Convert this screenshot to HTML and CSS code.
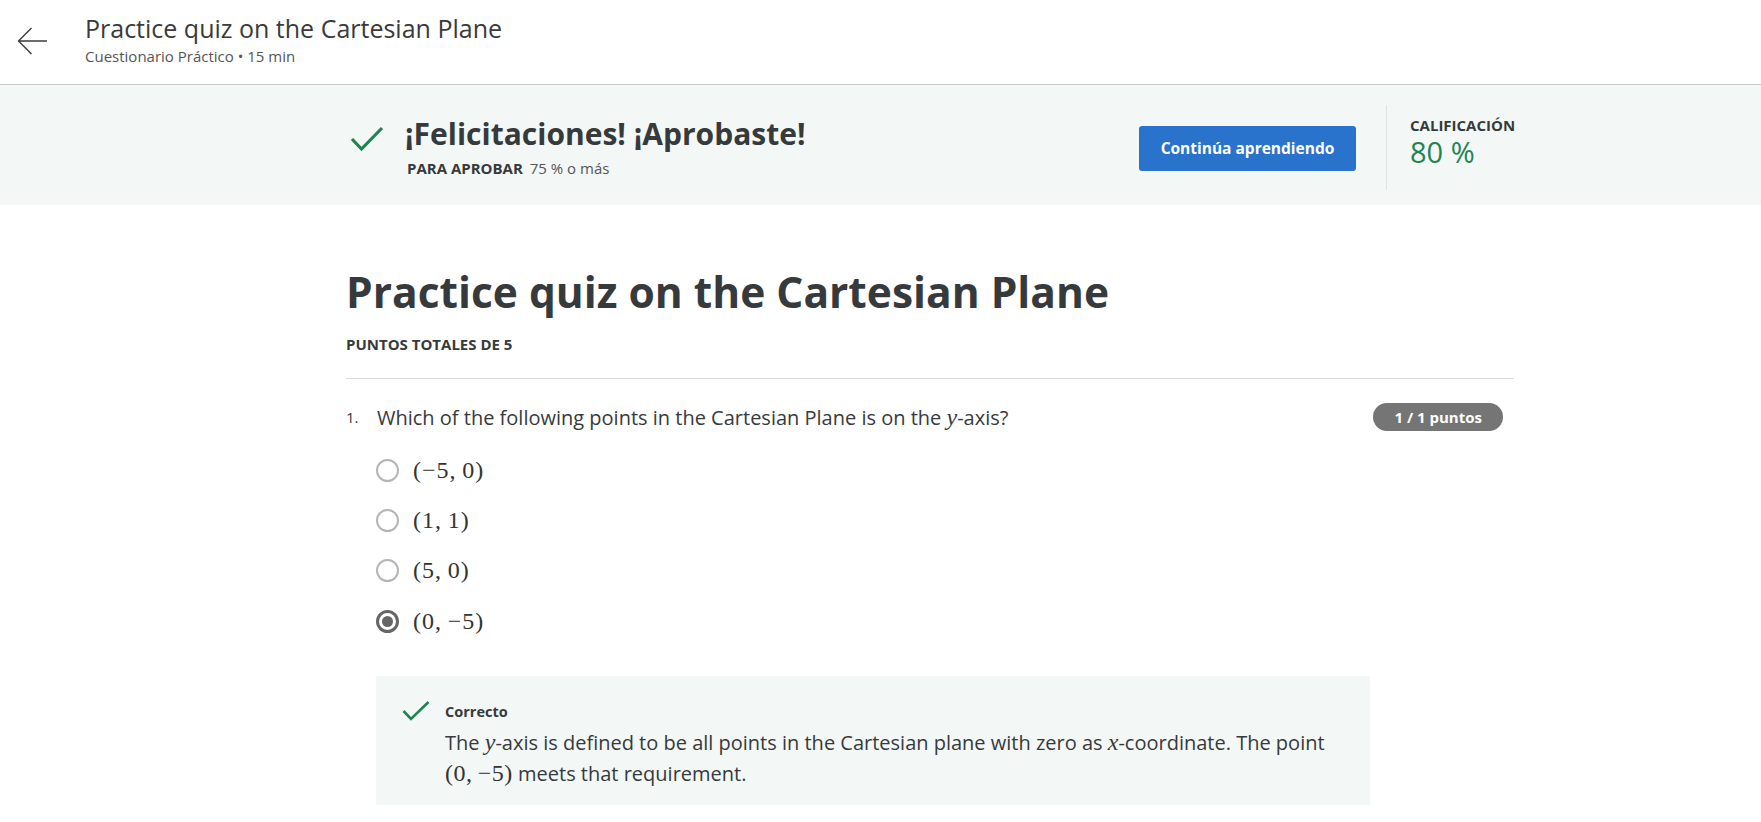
FILE: index.html
```html
<!DOCTYPE html>
<html lang="es">
<head>
<meta charset="utf-8">
<title>Practice quiz on the Cartesian Plane</title>
<link rel="stylesheet" href="styles.css">
</head>
<body>
<header class="topbar">
  <a class="back" href="#" aria-label="Volver">
    <svg width="30" height="28" viewBox="0 0 30 28"><path d="M30 14H1.5M14.5 1L1.5 14l13 13" fill="none" stroke="#3c3c3c" stroke-width="1.4"/></svg>
  </a>
  <div class="titles">
    <h1 class="page-title">Practice quiz on the Cartesian Plane</h1>
    <div class="page-sub">Cuestionario Práctico • 15 min</div>
  </div>
</header>

<section class="banner">
  <div class="banner-inner">
    <div class="pass">
      <svg class="pass-check" width="34" height="26" viewBox="0 0 34 26"><path d="M2 13l9.5 10L32 2" fill="none" stroke="#1f8354" stroke-width="3.2"/></svg>
      <div class="pass-text">
        <h2 class="pass-title">¡Felicitaciones! ¡Aprobaste!</h2>
        <div class="pass-req"><span class="pass-label">PARA APROBAR</span> <span class="pass-val">75 % o más</span></div>
      </div>
    </div>
    <button class="btn-primary">Continúa aprendiendo</button>
    <div class="vdivider"></div>
    <div class="grade">
      <div class="grade-label">CALIFICACIÓN</div>
      <div class="grade-val">80 %</div>
    </div>
  </div>
</section>

<main class="content">
  <h1 class="quiz-title">Practice quiz on the Cartesian Plane</h1>
  <div class="total">PUNTOS TOTALES DE 5</div>
  <hr class="rule">

  <div class="question">
    <div class="q-head">
      <span class="q-num">1.</span>
      <span class="q-text">Which of the following points in the Cartesian Plane is on the <span class="mv">y</span>-axis?</span>
      <span class="pill">1 / 1 puntos</span>
    </div>
    <div class="options">
      <div class="opt"><span class="radio"></span><span class="m">(−5,&thinsp;0)</span></div>
      <div class="opt"><span class="radio"></span><span class="m">(1,&thinsp;1)</span></div>
      <div class="opt"><span class="radio"></span><span class="m">(5,&thinsp;0)</span></div>
      <div class="opt"><span class="radio checked"></span><span class="m">(0,&thinsp;−5)</span></div>
    </div>
    <div class="feedback">
      <div class="fb-head">
        <svg class="fb-check" width="28" height="20" viewBox="0 0 28 20"><path d="M1.5 10l7.5 8L26.5 1" fill="none" stroke="#1f8354" stroke-width="2.6"/></svg>
        <span class="fb-title">Correcto</span>
      </div>
      <p class="fb-text">The <span class="mv">y</span>-axis is defined to be all points in the Cartesian plane with zero as <span class="mv">x</span>-coordinate. The point <span class="m small">(0,&thinsp;−5)</span> meets that requirement.</p>
    </div>
  </div>
</main>
</body>
</html>
```
FILE: styles.css
```css
* { box-sizing: border-box; }
body {
  margin: 0;
  font-family: "Open Sans", "Noto Sans", sans-serif;
  color: #373a3c;
  background: #fff;
}

/* top bar */
.topbar {
  display: flex;
  align-items: flex-start;
  height: 85px;
  border-bottom: 1px solid #c8c8c8;
  padding-left: 17px;
}
.back { display: block; margin-top: 27px; width: 30px; height: 28px; }
.back svg { display: block; }
.titles { margin-left: 38px; padding-top: 13px; }
.page-title {
  margin: 0;
  font-size: 25px;
  line-height: 30px;
  font-weight: 400;
  color: #3a3a3a;
}
.page-sub {
  margin-top: 3px;
  font-size: 15px;
  line-height: 20px;
  color: #555;
}

/* banner */
.banner {
  background: #f3f8f6;
  height: 120px;
}
.banner-inner {
  display: flex;
  align-items: center;
  width: 1168px;
  margin-left: 346px;
  height: 100%;
}
.pass { display: flex; align-items: flex-start; flex: 1; padding-top: 4px; }
.pass-check { margin-left: 4px; margin-top: 10px; }
.pass-text { margin-left: 21px; }
.pass-title {
  margin: 0;
  font-size: 30px;
  line-height: 36px;
  font-weight: 700;
  color: #373a3c;
}
.pass-req { margin-top: 6px; font-size: 15px; line-height: 20px; margin-left: 2px; }
.pass-label { font-weight: 700; margin-right: 3px; }
.pass-val { color: #555; }

.btn-primary {
  width: 217px;
  height: 45px;
  border: 0;
  border-radius: 3px;
  background: #2a73cc;
  color: #fff;
  font-family: inherit;
  font-size: 15.5px;
  font-weight: 700;
  margin-top: 6px;
}
.vdivider {
  width: 1px;
  height: 85px;
  background: #dfe3e1;
  margin: 4px 23px 0 30px;
}
.grade { width: 104px; align-self: flex-start; padding-top: 30px; }
.grade-label { font-size: 15px; line-height: 20px; font-weight: 700; color: #373a3c; }
.grade-val { font-size: 29px; line-height: 34px; color: #1f8354; }

/* main */
.content { width: 1168px; margin-left: 346px; padding-top: 59px; }
.quiz-title {
  margin: 0;
  font-size: 42.5px;
  line-height: 56px;
  font-weight: 700;
  color: #373a3c;
}
.total { margin-top: 14px; font-size: 15px; line-height: 20px; font-weight: 700; }
.rule { margin: 24px 0 0; border: 0; border-top: 1px solid #dcdcdc; }

.question { padding-top: 24px; }
.q-head { display: flex; align-items: center; height: 28px; padding-right: 11px; }
.q-num { width: 31px; font-size: 15px; }
.q-text { flex: 1; font-size: 20px; line-height: 28px; }
.pill {
  background: #757575;
  color: #fff;
  font-size: 15px;
  font-weight: 700;
  line-height: 28px;
  height: 28px;
  padding: 0 21px;
  border-radius: 14px;
}
.options { padding-left: 30px; margin-top: 14px; }
.opt { display: flex; align-items: center; height: 50.3px; }
.radio {
  width: 23px;
  height: 23px;
  border: 2px solid #b5b5b5;
  border-radius: 50%;
  margin-right: 14px;
  position: relative;
}
.radio.checked { border: 3px solid #666; }
.radio.checked::after {
  content: "";
  position: absolute;
  left: 3px; top: 3px;
  width: 11px; height: 11px;
  border-radius: 50%;
  background: #666;
}
.m {
  font-family: "Liberation Serif", "Times New Roman", serif;
  font-size: 24px;
  letter-spacing: 1px;
  color: #333;
}
.m.small { font-size: 24px; letter-spacing: 0.5px; }
.mv {
  font-family: "Liberation Serif", "Times New Roman", serif;
  font-style: italic;
  font-size: 24px;
}

.feedback {
  margin: 30px 0 0 30px;
  width: 994px;
  background: #f3f8f6;
  padding: 25px 26px 16px;
}
.fb-head { display: flex; align-items: center; height: 20px; }
.fb-title { margin-left: 15px; font-size: 14.5px; font-weight: 700; }
.fb-text { margin: 6px 0 0 43px; font-size: 20px; line-height: 31px; }
```
